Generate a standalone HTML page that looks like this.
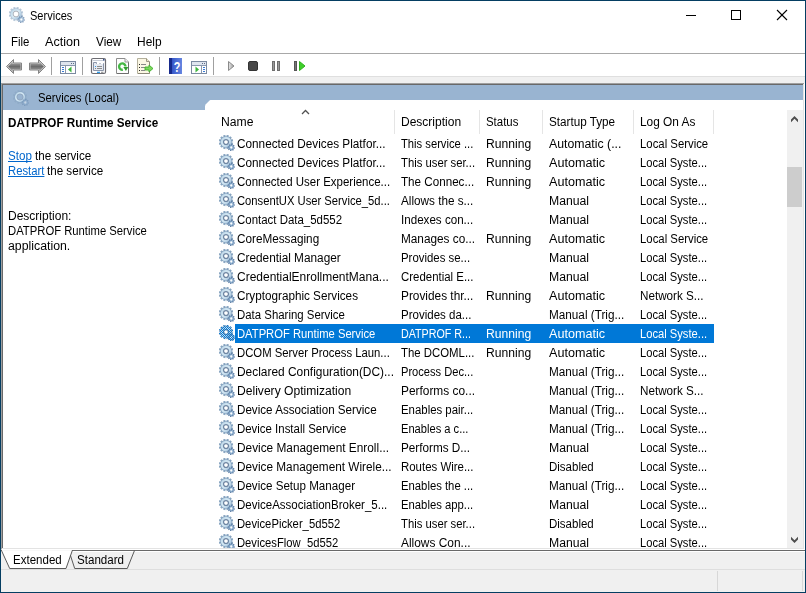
<!DOCTYPE html>
<html lang="en"><head><meta charset="utf-8"><title>Services</title>
<style>
html,body{margin:0;padding:0}
body{width:806px;height:593px;overflow:hidden;background:#fff;position:relative;font-family:"Liberation Sans",sans-serif;font-size:12px;color:#000}
.a{position:absolute}
.tx{position:absolute;white-space:pre;line-height:16px;height:16px;transform-origin:0 50%}
.sep{position:absolute;width:1px;background:#a0a0a0}
.hsep{position:absolute;width:1px;background:#e5e5e5;top:110px;height:24px}
.row{position:absolute;left:216px;width:571px;height:19px}
.link{color:#0066cc;text-decoration:underline}
svg{position:absolute;overflow:visible}
</style></head><body>
<svg width="0" height="0" style="position:absolute">
<defs>
<linearGradient id="gg" x1="0" y1="0" x2="1" y2="1">
<stop offset="0" stop-color="#9ab5cf"/><stop offset="0.5" stop-color="#b5d6ec"/><stop offset="1" stop-color="#6f8fb0"/>
</linearGradient>
<radialGradient id="gr" cx="0.5" cy="0.5" r="0.5">
<stop offset="0.45" stop-color="#6c86a6"/><stop offset="0.62" stop-color="#cfeaf8"/><stop offset="0.82" stop-color="#a9cfe8"/><stop offset="1" stop-color="#6f93b8"/>
</radialGradient>
<linearGradient id="gr2" gradientUnits="userSpaceOnUse" x1="-5" y1="-5" x2="5" y2="5">
<stop offset="0" stop-color="#b9d4e6"/><stop offset="0.5" stop-color="#d6eaf5"/><stop offset="1" stop-color="#98b8d4"/>
</linearGradient>
<linearGradient id="gt" gradientUnits="userSpaceOnUse" x1="-6" y1="-6" x2="6" y2="6">
<stop offset="0" stop-color="#93afca"/><stop offset="1" stop-color="#62829f"/>
</linearGradient>
<pattern id="chk" width="2" height="2" patternUnits="userSpaceOnUse">
<rect x="0" y="0" width="1" height="1" fill="#0078d7"/><rect x="1" y="1" width="1" height="1" fill="#0078d7"/>
</pattern>

<symbol id="gear" viewBox="0 0 16 16"><g transform="translate(7,7)"><g fill="url(#gt)" opacity="1">
<rect x="-1.150" y="-7.150" width="2.300" height="3" transform="rotate(15)"/>
<rect x="-1.150" y="-7.150" width="2.300" height="3" transform="rotate(45)"/>
<rect x="-1.150" y="-7.150" width="2.300" height="3" transform="rotate(75)"/>
<rect x="-1.150" y="-7.150" width="2.300" height="3" transform="rotate(105)"/>
<rect x="-1.150" y="-7.150" width="2.300" height="3" transform="rotate(135)"/>
<rect x="-1.150" y="-7.150" width="2.300" height="3" transform="rotate(165)"/>
<rect x="-1.150" y="-7.150" width="2.300" height="3" transform="rotate(195)"/>
<rect x="-1.150" y="-7.150" width="2.300" height="3" transform="rotate(225)"/>
<rect x="-1.150" y="-7.150" width="2.300" height="3" transform="rotate(255)"/>
<rect x="-1.150" y="-7.150" width="2.300" height="3" transform="rotate(285)"/>
<rect x="-1.150" y="-7.150" width="2.300" height="3" transform="rotate(315)"/>
<rect x="-1.150" y="-7.150" width="2.300" height="3" transform="rotate(345)"/>
</g><circle r="5.100" fill="none" stroke="#7a9cc0" stroke-width="0.700" opacity="1"/><circle r="4.05" fill="none" stroke="url(#gr2)" stroke-width="2.3"/>
<circle r="2.45" fill="none" stroke="#6f87a4" stroke-width="1.3"/></g>
<g transform="translate(12.300,12.500)" opacity="1"><g fill="#5b7da5">
<rect x="-0.700" y="-3.600" width="1.400" height="2.400" transform="rotate(10)"/>
<rect x="-0.700" y="-3.600" width="1.400" height="2.400" transform="rotate(55)"/>
<rect x="-0.700" y="-3.600" width="1.400" height="2.400" transform="rotate(100)"/>
<rect x="-0.700" y="-3.600" width="1.400" height="2.400" transform="rotate(145)"/>
<rect x="-0.700" y="-3.600" width="1.400" height="2.400" transform="rotate(190)"/>
<rect x="-0.700" y="-3.600" width="1.400" height="2.400" transform="rotate(235)"/>
<rect x="-0.700" y="-3.600" width="1.400" height="2.400" transform="rotate(280)"/>
<rect x="-0.700" y="-3.600" width="1.400" height="2.400" transform="rotate(325)"/>
</g><circle r="2.300" fill="#86abcd"/><circle r="1.150" fill="#fff"/></g></symbol>
<symbol id="gearh" viewBox="0 0 16 16"><g transform="translate(7,7)"><g fill="url(#gt)" opacity="0.5">
<rect x="-1.150" y="-7.150" width="2.300" height="3" transform="rotate(15)"/>
<rect x="-1.150" y="-7.150" width="2.300" height="3" transform="rotate(45)"/>
<rect x="-1.150" y="-7.150" width="2.300" height="3" transform="rotate(75)"/>
<rect x="-1.150" y="-7.150" width="2.300" height="3" transform="rotate(105)"/>
<rect x="-1.150" y="-7.150" width="2.300" height="3" transform="rotate(135)"/>
<rect x="-1.150" y="-7.150" width="2.300" height="3" transform="rotate(165)"/>
<rect x="-1.150" y="-7.150" width="2.300" height="3" transform="rotate(195)"/>
<rect x="-1.150" y="-7.150" width="2.300" height="3" transform="rotate(225)"/>
<rect x="-1.150" y="-7.150" width="2.300" height="3" transform="rotate(255)"/>
<rect x="-1.150" y="-7.150" width="2.300" height="3" transform="rotate(285)"/>
<rect x="-1.150" y="-7.150" width="2.300" height="3" transform="rotate(315)"/>
<rect x="-1.150" y="-7.150" width="2.300" height="3" transform="rotate(345)"/>
</g><circle r="5.100" fill="none" stroke="#7a9cc0" stroke-width="0.700" opacity="0.5"/><circle r="4.2" fill="none" stroke="url(#gr2)" stroke-width="1.8"/>
<circle r="3.1" fill="none" stroke="#8c9db6" stroke-width="0.6"/></g>
<g transform="translate(12.300,12.500)" opacity="0.45"><g fill="#5b7da5">
<rect x="-0.700" y="-3.600" width="1.400" height="2.400" transform="rotate(10)"/>
<rect x="-0.700" y="-3.600" width="1.400" height="2.400" transform="rotate(55)"/>
<rect x="-0.700" y="-3.600" width="1.400" height="2.400" transform="rotate(100)"/>
<rect x="-0.700" y="-3.600" width="1.400" height="2.400" transform="rotate(145)"/>
<rect x="-0.700" y="-3.600" width="1.400" height="2.400" transform="rotate(190)"/>
<rect x="-0.700" y="-3.600" width="1.400" height="2.400" transform="rotate(235)"/>
<rect x="-0.700" y="-3.600" width="1.400" height="2.400" transform="rotate(280)"/>
<rect x="-0.700" y="-3.600" width="1.400" height="2.400" transform="rotate(325)"/>
</g><circle r="2.300" fill="#86abcd"/><circle r="1.150" fill="#fff"/></g></symbol>
<symbol id="geart" viewBox="0 0 16 16"><g transform="translate(7,7)"><g fill="url(#gt)" opacity="0.6">
<rect x="-1.150" y="-7.150" width="2.300" height="3" transform="rotate(15)"/>
<rect x="-1.150" y="-7.150" width="2.300" height="3" transform="rotate(45)"/>
<rect x="-1.150" y="-7.150" width="2.300" height="3" transform="rotate(75)"/>
<rect x="-1.150" y="-7.150" width="2.300" height="3" transform="rotate(105)"/>
<rect x="-1.150" y="-7.150" width="2.300" height="3" transform="rotate(135)"/>
<rect x="-1.150" y="-7.150" width="2.300" height="3" transform="rotate(165)"/>
<rect x="-1.150" y="-7.150" width="2.300" height="3" transform="rotate(195)"/>
<rect x="-1.150" y="-7.150" width="2.300" height="3" transform="rotate(225)"/>
<rect x="-1.150" y="-7.150" width="2.300" height="3" transform="rotate(255)"/>
<rect x="-1.150" y="-7.150" width="2.300" height="3" transform="rotate(285)"/>
<rect x="-1.150" y="-7.150" width="2.300" height="3" transform="rotate(315)"/>
<rect x="-1.150" y="-7.150" width="2.300" height="3" transform="rotate(345)"/>
</g><circle r="5.100" fill="none" stroke="#7a9cc0" stroke-width="0.700" opacity="0.6"/><circle r="4.25" fill="none" stroke="url(#gr2)" stroke-width="2.0"/>
<circle r="2.9" fill="none" stroke="#8a94a0" stroke-width="0.7"/></g>
<g transform="translate(12.300,12.500)" opacity="0.75"><g fill="#5b7da5">
<rect x="-0.700" y="-3.600" width="1.400" height="2.400" transform="rotate(10)"/>
<rect x="-0.700" y="-3.600" width="1.400" height="2.400" transform="rotate(55)"/>
<rect x="-0.700" y="-3.600" width="1.400" height="2.400" transform="rotate(100)"/>
<rect x="-0.700" y="-3.600" width="1.400" height="2.400" transform="rotate(145)"/>
<rect x="-0.700" y="-3.600" width="1.400" height="2.400" transform="rotate(190)"/>
<rect x="-0.700" y="-3.600" width="1.400" height="2.400" transform="rotate(235)"/>
<rect x="-0.700" y="-3.600" width="1.400" height="2.400" transform="rotate(280)"/>
<rect x="-0.700" y="-3.600" width="1.400" height="2.400" transform="rotate(325)"/>
</g><circle r="2.300" fill="#86abcd"/><circle r="1.150" fill="#fff"/></g></symbol>

<mask id="gm" maskUnits="userSpaceOnUse" x="0" y="0" width="16" height="16">
<g transform="translate(7,7)" fill="#fff">
<rect x="-1.100" y="-7.100" width="2.200" height="3" transform="rotate(15)"/>
<rect x="-1.100" y="-7.100" width="2.200" height="3" transform="rotate(45)"/>
<rect x="-1.100" y="-7.100" width="2.200" height="3" transform="rotate(75)"/>
<rect x="-1.100" y="-7.100" width="2.200" height="3" transform="rotate(105)"/>
<rect x="-1.100" y="-7.100" width="2.200" height="3" transform="rotate(135)"/>
<rect x="-1.100" y="-7.100" width="2.200" height="3" transform="rotate(165)"/>
<rect x="-1.100" y="-7.100" width="2.200" height="3" transform="rotate(195)"/>
<rect x="-1.100" y="-7.100" width="2.200" height="3" transform="rotate(225)"/>
<rect x="-1.100" y="-7.100" width="2.200" height="3" transform="rotate(255)"/>
<rect x="-1.100" y="-7.100" width="2.200" height="3" transform="rotate(285)"/>
<rect x="-1.100" y="-7.100" width="2.200" height="3" transform="rotate(315)"/>
<rect x="-1.100" y="-7.100" width="2.200" height="3" transform="rotate(345)"/>
<circle r="5.700"/><circle r="1.900" fill="#000"/></g>
<circle cx="12.300" cy="12.600" r="3.300" fill="#fff"/>
</mask>
</defs></svg>

<div class="a" style="left:0;top:0;width:804px;height:591px;border:1px solid #053e62"></div>
<svg class="a" style="left:9px;top:7px" width="16" height="16"><use href="#geart"/></svg>
<div class="tx title" style="left:30.00px;top:8px;transform:scaleX(0.9200)">Services</div>
<svg style="left:680px;top:1px" width="125" height="29" shape-rendering="crispEdges">
<rect x="6" y="14" width="10" height="1" fill="#000"/>
<rect x="51.5" y="9.5" width="9" height="9" fill="none" stroke="#000" stroke-width="1"/>
<g shape-rendering="auto" stroke="#000" stroke-width="1.1"><line x1="97" y1="9" x2="107" y2="19"/><line x1="107" y1="9" x2="97" y2="19"/></g>
</svg>
<div class="tx menu" style="left:11.00px;top:34px;transform:scaleX(0.9515)">File</div>
<div class="tx menu" style="left:45.00px;top:34px;transform:scaleX(1.0498)">Action</div>
<div class="tx menu" style="left:96.00px;top:34px;transform:scaleX(0.9806)">View</div>
<div class="tx menu" style="left:137.00px;top:34px;transform:scaleX(0.9963)">Help</div>
<div class="a" style="left:1px;top:53px;width:804px;height:1px;background:#a8a8a8"></div>
<div class="a" style="left:1px;top:76px;width:804px;height:1px;background:#dfdfdf"></div>
<div class="a" style="left:1px;top:77px;width:804px;height:6px;background:#f0f0f0"></div>
<div class="sep" style="left:51px;top:57px;height:18px"></div>
<div class="sep" style="left:82px;top:57px;height:18px"></div>
<div class="sep" style="left:159px;top:57px;height:18px"></div>
<div class="sep" style="left:213px;top:57px;height:18px"></div>
<svg style="left:0;top:54px" width="320" height="22">
<defs>
<linearGradient id="ag" x1="0" y1="0" x2="0" y2="1"><stop offset="0" stop-color="#cfcfcf"/><stop offset="1" stop-color="#b4b4b4"/></linearGradient>
<linearGradient id="ag2" x1="0" y1="0" x2="0" y2="1"><stop offset="0" stop-color="#a8a8a8"/><stop offset="0.5" stop-color="#6c6c6c"/><stop offset="1" stop-color="#9c9c9c"/></linearGradient>
<linearGradient id="pg" x1="0" y1="0" x2="1" y2="0"><stop offset="0" stop-color="#e8e8e8"/><stop offset="1" stop-color="#9a9a9a"/></linearGradient>
<linearGradient id="hb" x1="0" y1="0" x2="1" y2="0"><stop offset="0" stop-color="#1a2f9c"/><stop offset="0.3" stop-color="#3a5ccc"/><stop offset="1" stop-color="#6585e0"/></linearGradient>
</defs>
<!-- back -->
<path d="M6.500 12.500 L13.500 5.500 V9 H21.500 V16 H13.500 V19.500 Z" fill="url(#ag)" stroke="#848484" stroke-width="1" stroke-linejoin="round"/>
<path d="M8.200 12.500 L12.500 8.200 V10 H20.500 V15 H12.500 V16.800 Z" fill="url(#ag2)"/>
<!-- forward -->
<path d="M45.500 12.500 L38.500 5.500 V9 H29.500 V16 H38.500 V19.500 Z" fill="url(#ag)" stroke="#848484" stroke-width="1" stroke-linejoin="round"/>
<path d="M43.800 12.500 L39.500 8.200 V10 H30.500 V15 H39.500 V16.800 Z" fill="url(#ag2)"/>
<!-- show/hide tree -->
<g>
<rect x="60.5" y="7.5" width="15" height="12" fill="#fff" stroke="#7b8aa0"/>
<rect x="61" y="8" width="14" height="3" fill="#dfe5ee"/>
<rect x="61" y="11" width="14" height="1" fill="#8a98ad"/><rect x="71" y="9" width="1" height="1" fill="#5b6b85"/><rect x="73" y="9" width="1" height="1" fill="#5b6b85"/>
<rect x="65" y="12" width="1" height="7" fill="#8a98ad"/>
<rect x="62" y="13" width="2" height="1" fill="#3a7bd5"/><rect x="62" y="15" width="2" height="1" fill="#3a7bd5"/><rect x="62" y="17" width="2" height="1" fill="#3a7bd5"/>
<path d="M71.5 12.5 V18.5 L68 15.5 Z" fill="#3cb53c"/>
</g>
<!-- properties -->
<g>
<rect x="91.500" y="4.500" width="14" height="15" rx="1.500" fill="#fdfdfe" stroke="#6c6c72" stroke-width="1.200"/>
<rect x="92.500" y="6" width="12" height="0.800" fill="#b9c0cc"/>
<rect x="103" y="5" width="1.500" height="1.500" fill="#3a4f8a"/>
<path d="M93.500 8.500 H96.500 V9.500 H103.500 V16.500 H93.500 Z" fill="#e6eaf2" stroke="#8a94a8"/>
<rect x="97" y="9" width="2.500" height="1" fill="#fff"/><rect x="100.500" y="9" width="2.500" height="1" fill="#fff"/>
<rect x="95" y="12" width="1" height="1" fill="#2f9be8"/><rect x="95" y="14" width="1" height="1" fill="#888"/>
<rect x="97" y="12" width="5" height="1" fill="#8c8c8c"/><rect x="97" y="14" width="5" height="1" fill="#8c8c8c"/>
<rect x="97" y="17.700" width="3" height="1.300" fill="#2f9be8"/><rect x="101" y="17.700" width="2.500" height="1.300" fill="#a0a0a0"/>
</g>
<!-- refresh -->
<g>
<path d="M116.500 4.500 H125 L128.500 8 V19.500 H116.500 Z" fill="#fdfdfd" stroke="#8c8c8c"/>
<path d="M117 19.500 H128.500 V8.500" fill="none" stroke="#6e6e6e"/>
<path d="M125 4.500 V8 H128.500" fill="#f2f2f2" stroke="#9a9a9a"/>
<path d="M125.500 12.600 A3.200 3.200 0 1 0 122.800 15.760" fill="none" stroke="#45b845" stroke-width="2.400"/>
<path d="M123.300 13.100 H128.300 L125.900 17 Z" fill="#2f9e2f"/>
</g>
<!-- export list -->
<g>
<path d="M137.500 4.500 H146.500 L149.500 7.500 V19.500 H137.500 Z" fill="#fbf7e4" stroke="#b4b09c"/><path d="M138 19.500 H149.500 V8" fill="none" stroke="#8c8878"/>
<path d="M146.500 4.500 V7.500 H149.500" fill="#ece6c8" stroke="#9a9684"/>
<rect x="139" y="10" width="1" height="1" fill="#222"/><rect x="139" y="13" width="1" height="1" fill="#222"/><rect x="139" y="16" width="1" height="1" fill="#222"/>
<rect x="141" y="10" width="5" height="1" fill="#888"/><rect x="141" y="13" width="4" height="1" fill="#888"/><rect x="141" y="16" width="4" height="1" fill="#888"/>
<path d="M145 13 H149 V11 L153 14.500 L149 18 V16 H145 Z" fill="#7ad85c" stroke="#3fae2a" stroke-width="0.900"/>
</g>
<!-- help -->
<g>
<rect x="169" y="4" width="13" height="16" fill="url(#hb)"/>
<rect x="169" y="4" width="3" height="16" fill="#172a8c"/>
<text x="177" y="18" font-family="Liberation Sans, sans-serif" font-weight="bold" font-size="15" fill="#fff" text-anchor="middle" transform="translate(177 0) scale(0.720 1) translate(-177 0)">?</text>
</g>
<!-- action pane -->
<g>
<rect x="191.500" y="7.500" width="15" height="12" fill="#fff" stroke="#7b8aa0"/>
<rect x="192" y="8" width="14" height="3" fill="#dfe5ee"/>
<rect x="192" y="11" width="14" height="1" fill="#8a98ad"/><rect x="202" y="9" width="1" height="1" fill="#5b6b85"/><rect x="204" y="9" width="1" height="1" fill="#5b6b85"/>
<rect x="201" y="12" width="1" height="7" fill="#8a98ad"/>
<rect x="203" y="13" width="2" height="1" fill="#3a7bd5"/><rect x="203" y="15" width="2" height="1" fill="#3a7bd5"/><rect x="203" y="17" width="2" height="1" fill="#3a7bd5"/>
<path d="M195.500 12.500 V18.500 L199 15.500 Z" fill="#3cb53c"/>
</g>
<!-- play -->
<path d="M228.500 7.500 V16.500 L234 12 Z" fill="url(#pg)" stroke="#8a8a8a" stroke-width="1" stroke-linejoin="round"/>
<!-- stop -->
<rect x="248.500" y="7.500" width="9" height="9" rx="1.500" fill="#484848" stroke="#333"/>
<!-- pause -->
<rect x="272.500" y="7.500" width="2" height="9" fill="#9a9a9a" stroke="#6e6e6e"/>
<rect x="277.500" y="7.500" width="2" height="9" fill="#9a9a9a" stroke="#6e6e6e"/>
<!-- resume -->
<rect x="294.500" y="7.500" width="2" height="9" fill="#777" stroke="#555"/>
<path d="M299.500 7.500 V16.500 L305 12 Z" fill="#3fd02a" stroke="#2fb01e" stroke-width="1" stroke-linejoin="round"/>
</svg>
<div class="a" style="left:1px;top:83px;width:804px;height:467px;background:#fff"></div>
<div class="a" style="left:1px;top:83px;width:803px;height:1px;background:#a0a0a0"></div>
<div class="a" style="left:1px;top:83px;width:1px;height:466px;background:#a0a0a0"></div>
<div class="a" style="left:2px;top:84px;width:801px;height:1px;background:#696969"></div>
<div class="a" style="left:2px;top:84px;width:1px;height:464px;background:#696969"></div>
<div class="a" style="left:803px;top:84px;width:1px;height:465px;background:#e3e3e3"></div>
<div class="a" style="left:3px;top:85px;width:800px;height:25px;background:#99b4d1"></div>
<div class="a" style="left:205px;top:100px;width:598px;height:10px;background:#fff;clip-path:polygon(0 10px,0 6px,0.800px 4.200px,4.800px 0.200px,5.500px 0,100% 0,100% 10px)"></div>
<svg class="a" style="left:13px;top:90px" width="16" height="16"><use href="#gearh"/></svg>
<div class="tx hdr" style="left:38.00px;top:90px;transform:scaleX(0.9429)">Services (Local)</div>
<div class="tx bold" style="left:8.00px;top:115px;font-weight:bold;transform:scaleX(0.9731)">DATPROF Runtime Service</div>
<div class="tx l" style="left:8.00px;top:148px;color:#0066cc;text-decoration:underline;text-decoration-skip-ink:none;transform:scaleX(0.9681)">Stop</div>
<div class="tx l1" style="left:35.00px;top:148px;transform:scaleX(0.9685)">the service</div>
<div class="tx l" style="left:8.00px;top:163px;color:#0066cc;text-decoration:underline;text-decoration-skip-ink:none;transform:scaleX(0.9409)">Restart</div>
<div class="tx l2" style="left:47.00px;top:163px;transform:scaleX(0.9675)">the service</div>
<div class="tx d" style="left:8.00px;top:208px;transform:scaleX(1.0008)">Description:</div>
<div class="tx d" style="left:8.00px;top:223px;transform:scaleX(0.9397)">DATPROF Runtime Service</div>
<div class="tx d" style="left:8.00px;top:238px;transform:scaleX(1.0252)">application.</div>
<div class="hsep" style="left:394px"></div>
<div class="hsep" style="left:479px"></div>
<div class="hsep" style="left:542px"></div>
<div class="hsep" style="left:633px"></div>
<div class="hsep" style="left:713px"></div>
<div class="tx h" style="left:221.00px;top:114px;transform:scaleX(1.0136)">Name</div>
<div class="tx h" style="left:401.00px;top:114px;transform:scaleX(1.0012)">Description</div>
<div class="tx h" style="left:486.00px;top:114px;transform:scaleX(0.9513)">Status</div>
<div class="tx h" style="left:549.00px;top:114px;transform:scaleX(0.9742)">Startup Type</div>
<div class="tx h" style="left:640.00px;top:114px;transform:scaleX(0.9879)">Log On As</div>
<svg style="left:300px;top:108px" width="12" height="8"><path d="M2 6 L5.500 2.500 L9 6" fill="none" stroke="#505050" stroke-width="1.250"/></svg>
<svg class="a" style="left:219px;top:135px" width="16" height="16"><use href="#gear"/></svg>
<div class="tx c0" style="left:237.00px;top:136px;transform:scaleX(0.9808)">Connected Devices Platfor...</div>
<div class="tx c1" style="left:401.00px;top:136px;transform:scaleX(0.9342)">This service ...</div>
<div class="tx c2" style="left:486.00px;top:136px;transform:scaleX(1.0096)">Running</div>
<div class="tx c3" style="left:549.00px;top:136px;transform:scaleX(1.0246)">Automatic (...</div>
<div class="tx c4" style="left:640.00px;top:136px;transform:scaleX(0.9466)">Local Service</div>
<svg class="a" style="left:219px;top:154px" width="16" height="16"><use href="#gear"/></svg>
<div class="tx c0" style="left:237.00px;top:155px;transform:scaleX(0.9808)">Connected Devices Platfor...</div>
<div class="tx c1" style="left:401.00px;top:155px;transform:scaleX(0.9407)">This user ser...</div>
<div class="tx c2" style="left:486.00px;top:155px;transform:scaleX(1.0096)">Running</div>
<div class="tx c3" style="left:549.00px;top:155px;transform:scaleX(1.0498)">Automatic</div>
<div class="tx c4" style="left:640.00px;top:155px;transform:scaleX(0.9314)">Local Syste...</div>
<svg class="a" style="left:219px;top:173px" width="16" height="16"><use href="#gear"/></svg>
<div class="tx c0" style="left:237.00px;top:174px;transform:scaleX(0.9567)">Connected User Experience...</div>
<div class="tx c1" style="left:401.00px;top:174px;transform:scaleX(0.9705)">The Connec...</div>
<div class="tx c2" style="left:486.00px;top:174px;transform:scaleX(1.0096)">Running</div>
<div class="tx c3" style="left:549.00px;top:174px;transform:scaleX(1.0498)">Automatic</div>
<div class="tx c4" style="left:640.00px;top:174px;transform:scaleX(0.9314)">Local Syste...</div>
<svg class="a" style="left:219px;top:192px" width="16" height="16"><use href="#gear"/></svg>
<div class="tx c0" style="left:237.00px;top:193px;transform:scaleX(0.9357)">ConsentUX User Service_5d...</div>
<div class="tx c1" style="left:401.00px;top:193px;transform:scaleX(0.9778)">Allows the s...</div>
<div class="tx c3" style="left:549.00px;top:193px;transform:scaleX(1.0178)">Manual</div>
<div class="tx c4" style="left:640.00px;top:193px;transform:scaleX(0.9314)">Local Syste...</div>
<svg class="a" style="left:219px;top:211px" width="16" height="16"><use href="#gear"/></svg>
<div class="tx c0" style="left:237.00px;top:212px;transform:scaleX(0.9539)">Contact Data_5d552</div>
<div class="tx c1" style="left:401.00px;top:212px;transform:scaleX(0.9675)">Indexes con...</div>
<div class="tx c3" style="left:549.00px;top:212px;transform:scaleX(1.0178)">Manual</div>
<div class="tx c4" style="left:640.00px;top:212px;transform:scaleX(0.9314)">Local Syste...</div>
<svg class="a" style="left:219px;top:230px" width="16" height="16"><use href="#gear"/></svg>
<div class="tx c0" style="left:237.00px;top:231px;transform:scaleX(0.9777)">CoreMessaging</div>
<div class="tx c1" style="left:401.00px;top:231px;transform:scaleX(0.9822)">Manages co...</div>
<div class="tx c2" style="left:486.00px;top:231px;transform:scaleX(1.0096)">Running</div>
<div class="tx c3" style="left:549.00px;top:231px;transform:scaleX(1.0498)">Automatic</div>
<div class="tx c4" style="left:640.00px;top:231px;transform:scaleX(0.9466)">Local Service</div>
<svg class="a" style="left:219px;top:249px" width="16" height="16"><use href="#gear"/></svg>
<div class="tx c0" style="left:237.00px;top:250px;transform:scaleX(0.9841)">Credential Manager</div>
<div class="tx c1" style="left:401.00px;top:250px;transform:scaleX(0.9500)">Provides se...</div>
<div class="tx c3" style="left:549.00px;top:250px;transform:scaleX(1.0178)">Manual</div>
<div class="tx c4" style="left:640.00px;top:250px;transform:scaleX(0.9314)">Local Syste...</div>
<svg class="a" style="left:219px;top:268px" width="16" height="16"><use href="#gear"/></svg>
<div class="tx c0" style="left:237.00px;top:269px;transform:scaleX(0.9983)">CredentialEnrollmentMana...</div>
<div class="tx c1" style="left:401.00px;top:269px;transform:scaleX(0.9526)">Credential E...</div>
<div class="tx c3" style="left:549.00px;top:269px;transform:scaleX(1.0178)">Manual</div>
<div class="tx c4" style="left:640.00px;top:269px;transform:scaleX(0.9314)">Local Syste...</div>
<svg class="a" style="left:219px;top:287px" width="16" height="16"><use href="#gear"/></svg>
<div class="tx c0" style="left:237.00px;top:288px;transform:scaleX(0.9753)">Cryptographic Services</div>
<div class="tx c1" style="left:401.00px;top:288px;transform:scaleX(0.9864)">Provides thr...</div>
<div class="tx c2" style="left:486.00px;top:288px;transform:scaleX(1.0096)">Running</div>
<div class="tx c3" style="left:549.00px;top:288px;transform:scaleX(1.0498)">Automatic</div>
<div class="tx c4" style="left:640.00px;top:288px;transform:scaleX(0.9723)">Network S...</div>
<svg class="a" style="left:219px;top:306px" width="16" height="16"><use href="#gear"/></svg>
<div class="tx c0" style="left:237.00px;top:307px;transform:scaleX(0.9514)">Data Sharing Service</div>
<div class="tx c1" style="left:401.00px;top:307px;transform:scaleX(0.9593)">Provides da...</div>
<div class="tx c3" style="left:549.00px;top:307px;transform:scaleX(0.9783)">Manual (Trig...</div>
<div class="tx c4" style="left:640.00px;top:307px;transform:scaleX(0.9314)">Local Syste...</div>
<div class="a" style="left:235px;top:324px;width:479px;height:19px;background:#0078d7"></div>
<svg class="a" style="left:219px;top:325px" width="16" height="16"><use href="#gear"/><rect width="16" height="16" fill="url(#chk)" style="mix-blend-mode:normal" mask="url(#gm)"/></svg>
<div class="tx c0" style="left:237.00px;top:326px;color:#fff;transform:scaleX(0.9359)">DATPROF Runtime Service</div>
<div class="tx c1" style="left:401.00px;top:326px;color:#fff;transform:scaleX(0.8922)">DATPROF R...</div>
<div class="tx c2" style="left:486.00px;top:326px;color:#fff;transform:scaleX(1.0096)">Running</div>
<div class="tx c3" style="left:549.00px;top:326px;color:#fff;transform:scaleX(1.0498)">Automatic</div>
<div class="tx c4" style="left:640.00px;top:326px;color:#fff;transform:scaleX(0.9314)">Local Syste...</div>
<svg class="a" style="left:219px;top:344px" width="16" height="16"><use href="#gear"/></svg>
<div class="tx c0" style="left:237.00px;top:345px;transform:scaleX(0.9428)">DCOM Server Process Laun...</div>
<div class="tx c1" style="left:401.00px;top:345px;transform:scaleX(0.9491)">The DCOML...</div>
<div class="tx c2" style="left:486.00px;top:345px;transform:scaleX(1.0096)">Running</div>
<div class="tx c3" style="left:549.00px;top:345px;transform:scaleX(1.0498)">Automatic</div>
<div class="tx c4" style="left:640.00px;top:345px;transform:scaleX(0.9314)">Local Syste...</div>
<svg class="a" style="left:219px;top:363px" width="16" height="16"><use href="#gear"/></svg>
<div class="tx c0" style="left:237.00px;top:364px;transform:scaleX(0.9932)">Declared Configuration(DC)...</div>
<div class="tx c1" style="left:401.00px;top:364px;transform:scaleX(0.9263)">Process Dec...</div>
<div class="tx c3" style="left:549.00px;top:364px;transform:scaleX(0.9783)">Manual (Trig...</div>
<div class="tx c4" style="left:640.00px;top:364px;transform:scaleX(0.9314)">Local Syste...</div>
<svg class="a" style="left:219px;top:382px" width="16" height="16"><use href="#gear"/></svg>
<div class="tx c0" style="left:237.00px;top:383px;transform:scaleX(1.0078)">Delivery Optimization</div>
<div class="tx c1" style="left:401.00px;top:383px;transform:scaleX(0.9907)">Performs co...</div>
<div class="tx c3" style="left:549.00px;top:383px;transform:scaleX(0.9783)">Manual (Trig...</div>
<div class="tx c4" style="left:640.00px;top:383px;transform:scaleX(0.9723)">Network S...</div>
<svg class="a" style="left:219px;top:401px" width="16" height="16"><use href="#gear"/></svg>
<div class="tx c0" style="left:237.00px;top:402px;transform:scaleX(0.9692)">Device Association Service</div>
<div class="tx c1" style="left:401.00px;top:402px;transform:scaleX(0.9501)">Enables pair...</div>
<div class="tx c3" style="left:549.00px;top:402px;transform:scaleX(0.9783)">Manual (Trig...</div>
<div class="tx c4" style="left:640.00px;top:402px;transform:scaleX(0.9314)">Local Syste...</div>
<svg class="a" style="left:219px;top:420px" width="16" height="16"><use href="#gear"/></svg>
<div class="tx c0" style="left:237.00px;top:421px;transform:scaleX(0.9526)">Device Install Service</div>
<div class="tx c1" style="left:401.00px;top:421px;transform:scaleX(0.9273)">Enables a c...</div>
<div class="tx c3" style="left:549.00px;top:421px;transform:scaleX(0.9783)">Manual (Trig...</div>
<div class="tx c4" style="left:640.00px;top:421px;transform:scaleX(0.9314)">Local Syste...</div>
<svg class="a" style="left:219px;top:439px" width="16" height="16"><use href="#gear"/></svg>
<div class="tx c0" style="left:237.00px;top:440px;transform:scaleX(0.9865)">Device Management Enroll...</div>
<div class="tx c1" style="left:401.00px;top:440px;transform:scaleX(0.9775)">Performs D...</div>
<div class="tx c3" style="left:549.00px;top:440px;transform:scaleX(1.0178)">Manual</div>
<div class="tx c4" style="left:640.00px;top:440px;transform:scaleX(0.9314)">Local Syste...</div>
<svg class="a" style="left:219px;top:458px" width="16" height="16"><use href="#gear"/></svg>
<div class="tx c0" style="left:237.00px;top:459px;transform:scaleX(0.9816)">Device Management Wirele...</div>
<div class="tx c1" style="left:401.00px;top:459px;transform:scaleX(0.9527)">Routes Wire...</div>
<div class="tx c3" style="left:549.00px;top:459px;transform:scaleX(0.9577)">Disabled</div>
<div class="tx c4" style="left:640.00px;top:459px;transform:scaleX(0.9314)">Local Syste...</div>
<svg class="a" style="left:219px;top:477px" width="16" height="16"><use href="#gear"/></svg>
<div class="tx c0" style="left:237.00px;top:478px;transform:scaleX(0.9666)">Device Setup Manager</div>
<div class="tx c1" style="left:401.00px;top:478px;transform:scaleX(0.9417)">Enables the ...</div>
<div class="tx c3" style="left:549.00px;top:478px;transform:scaleX(0.9783)">Manual (Trig...</div>
<div class="tx c4" style="left:640.00px;top:478px;transform:scaleX(0.9314)">Local Syste...</div>
<svg class="a" style="left:219px;top:496px" width="16" height="16"><use href="#gear"/></svg>
<div class="tx c0" style="left:237.00px;top:497px;transform:scaleX(0.9590)">DeviceAssociationBroker_5...</div>
<div class="tx c1" style="left:401.00px;top:497px;transform:scaleX(0.9417)">Enables app...</div>
<div class="tx c3" style="left:549.00px;top:497px;transform:scaleX(1.0178)">Manual</div>
<div class="tx c4" style="left:640.00px;top:497px;transform:scaleX(0.9314)">Local Syste...</div>
<svg class="a" style="left:219px;top:515px" width="16" height="16"><use href="#gear"/></svg>
<div class="tx c0" style="left:237.00px;top:516px;transform:scaleX(0.9372)">DevicePicker_5d552</div>
<div class="tx c1" style="left:401.00px;top:516px;transform:scaleX(0.9407)">This user ser...</div>
<div class="tx c3" style="left:549.00px;top:516px;transform:scaleX(0.9577)">Disabled</div>
<div class="tx c4" style="left:640.00px;top:516px;transform:scaleX(0.9314)">Local Syste...</div>
<svg class="a" style="left:219px;top:534px" width="16" height="16"><use href="#gear"/></svg>
<div class="tx c0" style="left:237.00px;top:535px;transform:scaleX(0.9364)">DevicesFlow_5d552</div>
<div class="tx c1" style="left:401.00px;top:535px;transform:scaleX(0.9928)">Allows Con...</div>
<div class="tx c3" style="left:549.00px;top:535px;transform:scaleX(1.0178)">Manual</div>
<div class="tx c4" style="left:640.00px;top:535px;transform:scaleX(0.9314)">Local Syste...</div>
<div class="a" style="left:787px;top:110px;width:16px;height:438px;background:#f0f0f0"></div>
<div class="a" style="left:787px;top:167px;width:15px;height:40px;background:#cdcdcd"></div>
<svg style="left:787px;top:110px" width="17" height="17"><path d="M4 9.500 L7.500 6 L11 9.500 V12.300 L7.500 8.800 L4 12.300 Z" fill="#4d4d4d"/></svg>
<svg style="left:787px;top:531px" width="17" height="17"><path d="M4 8.500 L7.500 12 L11 8.500 V5.700 L7.500 9.200 L4 5.700 Z" fill="#4d4d4d"/></svg>
<div class="a" style="left:2px;top:548px;width:802px;height:1px;background:#e3e3e3"></div>
<div class="a" style="left:1px;top:550px;width:804px;height:42px;background:#f0f0f0"></div>
<div class="a" style="left:1px;top:549px;width:804px;height:1px;background:#fff"></div>
<div class="a" style="left:1px;top:551px;width:804px;height:1px;background:#fff"></div>
<svg style="left:0;top:549px" width="806" height="24">
<path d="M1 20.500 H805" stroke="#dedede" fill="none"/>
<path d="M1 1.500 L9.500 19.500 H66 L72 1.500 Z" fill="#fff"/>
<path d="M72 1.500 H805" stroke="#696969" fill="none"/>
<path d="M1 0.500 L9.700 19.500 H66 L72.500 1" fill="none" stroke="#5a5a5a" stroke-width="1"/>
<path d="M70.300 6 L74.700 19.500 H127.300 L134.500 1.500" fill="none" stroke="#5a5a5a" stroke-width="1"/>
</svg>
<div class="tx tab" style="left:13.00px;top:552px;transform:scaleX(0.9603)">Extended</div>
<div class="tx tab" style="left:77.00px;top:552px;transform:scaleX(0.9652)">Standard</div>
<div class="a" style="left:717px;top:571px;width:1px;height:20px;background:#d7d7d7"></div>
<div class="a" style="left:802px;top:571px;width:1px;height:20px;background:#d7d7d7"></div>
</body></html>
